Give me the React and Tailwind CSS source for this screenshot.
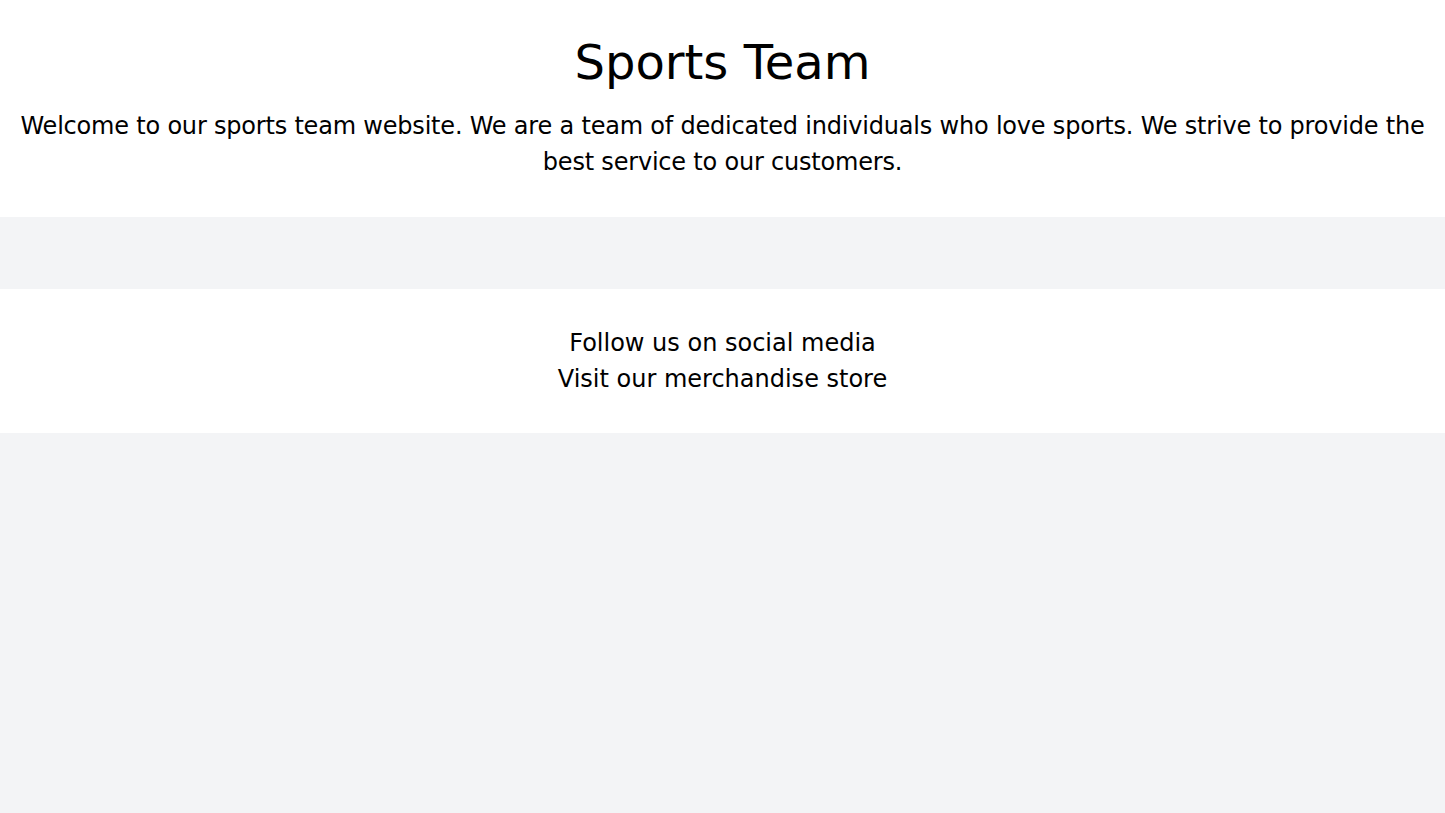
export default function App() {
  return (
    <div className="min-h-screen bg-gray-100 text-black" style={{ fontFamily: '"DejaVu Sans", sans-serif' }}>
      <header className="bg-white pt-8 pb-[37px] text-center">
        <h1 className="text-5xl leading-[60px]">Sports Team</h1>
        <p className="mt-4 text-2xl leading-9 tracking-[-0.2px]">
          Welcome to our sports team website. We are a team of dedicated individuals who love sports. We strive to provide the best service to our customers.
        </p>
      </header>
      <main className="h-[72px]"></main>
      <footer className="bg-white py-9 text-center text-2xl leading-9">
        <p>Follow us on social media</p>
        <p>Visit our merchandise store</p>
      </footer>
    </div>
  );
}
